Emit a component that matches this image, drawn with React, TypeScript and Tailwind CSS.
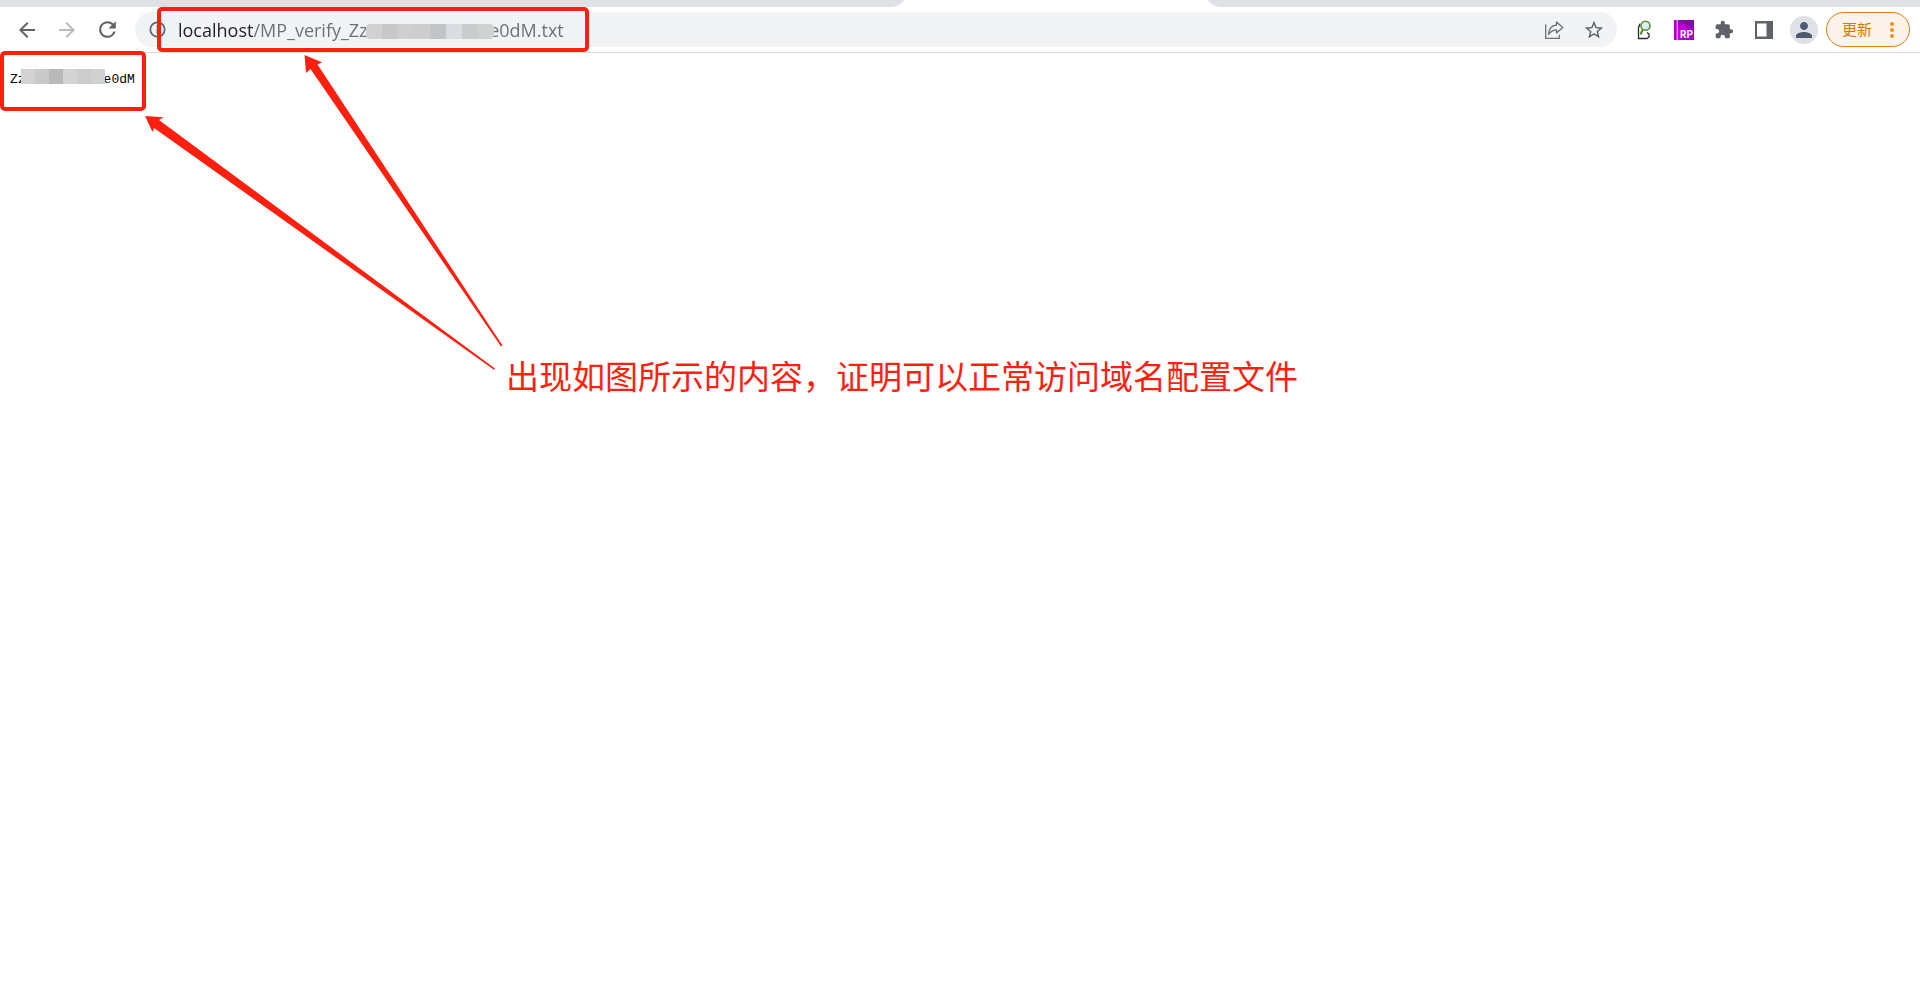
import React from "react";
import { MdArrowBack, MdArrowForward, MdExtension, MdPerson, MdRefresh, MdStarBorder } from "react-icons/md";

const GAP = "\u00a0";

export default function App() {
  return (
    <div className="relative min-h-screen w-full overflow-hidden bg-white font-['Open_Sans','Noto_Sans_CJK_SC',sans-serif]">
      <TabStrip />
      <Toolbar />
      <main className="relative">
        <pre className="px-[10px] pt-[19px] font-['Liberation_Mono',monospace] text-[13px] leading-4 text-black">
          {"Zz" + GAP.repeat(10) + "e0dM"}
        </pre>
        <Mosaic
          className="absolute left-[21px] top-4 h-[15px] w-[84px]"
          colors={["bg-[#d3d3d3]", "bg-[#c9c9c9]", "bg-[#b9b9b9]", "bg-[#d3d3d3]", "bg-[#cccccc]", "bg-[#d0d0d0]"]}
        />
        <div className="pointer-events-none absolute -top-[2px] left-0 z-10 h-[60px] w-[146px] rounded-[5px] border-4 border-[#ff1f0f]" />
        <p className="pl-[506px] pt-[265px] text-[33px] leading-[48px] text-[#ff1f0f]">
          出现如图所示的内容，证明可以正常访问域名配置文件
        </p>
      </main>
      <Arrows />
    </div>
  );
}

function TabStrip() {
  return (
    <div className="flex h-[7px] items-end overflow-hidden">
      <div className="h-5 w-[907px] shrink-0 rounded-br-2xl bg-[#dee1e6]" />
      <div className="w-[298px] shrink-0" />
      <div className="h-5 flex-1 rounded-bl-2xl bg-[#dee1e6]" />
    </div>
  );
}

function Toolbar() {
  return (
    <header className="flex h-[46px] items-center border-b border-[#dadada] pl-[7px] pr-[10px]">
      <ToolButton label="后退">
        <MdArrowBack size={24} className="text-[#5f6368]" />
      </ToolButton>
      <ToolButton label="前进">
        <MdArrowForward size={24} className="text-[#babcbe]" />
      </ToolButton>
      <ToolButton label="重新加载">
        <MdRefresh size={25} className="text-[#5f6368]" />
      </ToolButton>

      <div className="ml-2 mr-[7px] flex h-[35px] flex-1 items-center rounded-full bg-[#f1f3f4] pl-[14px] pr-[3px]">
        <button aria-label="网站信息" className="mr-[12px]">
          <InfoIcon />
        </button>
        <div className="relative flex h-full flex-1 items-center">
          <input
            aria-label="地址"
            readOnly
            value={"localhost/MP_verify_Zz" + GAP.repeat(26) + "e0dM.txt"}
            className="h-full w-full bg-linear-to-r from-[#202124] from-[76px] to-[#6b6f73] to-[76px] bg-clip-text text-lg text-transparent outline-none"
          />
          <Mosaic
            className="absolute left-[188px] top-3 h-[15px] w-[128px] rounded-sm"
            colors={[
              "bg-[#d0d1d1]",
              "bg-[#c8c8c8]",
              "bg-[#cfcfcf]",
              "bg-[#cdcdce]",
              "bg-[#c3c4c8]",
              "bg-[#d9dce0]",
              "bg-[#c9cccd]",
              "bg-[#d0d2d1]",
            ]}
          />
          <div className="pointer-events-none absolute -bottom-[5px] -left-[21px] -top-[5px] z-10 w-[432px] rounded-[5px] border-4 border-[#ff1f0f]" />
        </div>
        <ToolButton label="分享">
          <ShareIcon />
        </ToolButton>
        <ToolButton label="收藏">
          <MdStarBorder size={22} className="text-[#5f6368]" />
        </ToolButton>
      </div>

      <ToolButton label="搜索扩展">
        <FinderIcon />
      </ToolButton>
      <ToolButton label="Axure RP">
        <AxureIcon />
      </ToolButton>
      <ToolButton label="扩展程序">
        <MdExtension size={20} className="text-[#5f6368]" />
      </ToolButton>
      <ToolButton label="侧边栏">
        <svg width="18" height="18" viewBox="0 0 18 18">
          <path fill="#5f6368" fillRule="evenodd" d="M0 0h18v18H0zM2 2.5v13h9.5v-13z" />
        </svg>
      </ToolButton>
      <ToolButton label="用户">
        <span className="flex size-7 items-center justify-center rounded-full bg-[#dee1e6]">
          <MdPerson size={24} className="text-[#4d5a70]" />
        </span>
      </ToolButton>
      <button className="ml-[2px] flex h-[35px] w-[84px] items-center rounded-full border border-[#e37d1a] bg-[#fdf3ea] pl-[15px] text-[15px] text-[#e37400]">
        更新
        <svg className="ml-[18px]" width="4" height="18" viewBox="0 0 4 18" fill="#f29111">
          <circle cx="2" cy="3" r="2" />
          <circle cx="2" cy="9" r="2" />
          <circle cx="2" cy="15" r="2" />
        </svg>
      </button>
    </header>
  );
}

const ToolButton = ({ label, children }: { label: string; children: React.ReactNode }) => (
  <button aria-label={label} className="flex h-8 w-10 shrink-0 items-center justify-center">
    {children}
  </button>
);

const Mosaic = ({ className, colors }: { className: string; colors: string[] }) => (
  <div className={`${className} flex overflow-hidden`}>
    {colors.map((color, i) => (
      <span key={i} className={`${color} flex-1`} />
    ))}
  </div>
);

const InfoIcon = () => (
  <svg width="17" height="17" viewBox="0 0 17 17" fill="none" stroke="#5f6368">
    <circle cx="8.5" cy="8.5" r="7.2" strokeWidth="1.7" />
    <path d="M8.5 7.5v5M8.5 4.3v1.8" strokeWidth="1.8" />
  </svg>
);

const ShareIcon = () => (
  <svg width="20" height="20" viewBox="0 0 20 20" fill="none" stroke="#6b6f73" strokeWidth="1.3">
    <path d="M1.7 4.5v13.8h13.6v-3.6" />
    <path d="M4.5 14.5C4.8 9 7.5 5.500 12.5 5V2l6.300 5.500-6.300 5.500V9.800C9 9.900 6.500 11.500 4.500 14.500z" strokeLinejoin="round" />
  </svg>
);

// small page with a magnifier on top
const FinderIcon = () => (
  <svg width="16" height="20" viewBox="0 0 16 20" fill="none">
    <path d="M4.5 4.500H3.500V6L2.500 7v11.500H11l2-1.500v-3l-2-1.500" stroke="#2b2b2b" strokeWidth="1.300" />
    <path d="M6.800 9.500 4.500 14.500" stroke="#4d8b22" strokeWidth="2" />
    <circle cx="9.500" cy="5.800" r="4.500" fill="#d8ecf6" stroke="#5c8f35" strokeWidth="1.600" />
  </svg>
);

const AxureIcon = () => (
  <svg width="20" height="20" viewBox="0 0 20 20">
    <path d="M0 0h20v20H0z" fill="#a800c8" />
    <path d="M4 0h16v8L10 4z" fill="#7c0fa3" />
    <path d="M4 20V9l6-5 4 7z" fill="#c400dc" />
    <path d="M3.200 0v20" stroke="#f3c6fa" strokeWidth="1" />
    <text x="6" y="18" fill="#fff" fontFamily="Roboto, sans-serif" fontSize="10" fontWeight="700">
      RP
    </text>
  </svg>
);

const Arrows = () => (
  <svg
    aria-hidden="true"
    className="pointer-events-none absolute left-0 top-0 z-20"
    width="520"
    height="380"
    viewBox="0 0 520 380"
    fill="#ff1f0f"
  >
    <path d="M304.500 55 322 62.300 317.500 64.500 502.500 345.500 501 346.500 310.500 69 306 73z" />
    <path d="M145 116 163.500 117.300 159 120 495 368.500 494 369.800 154 128 152.500 132z" />
  </svg>
);
